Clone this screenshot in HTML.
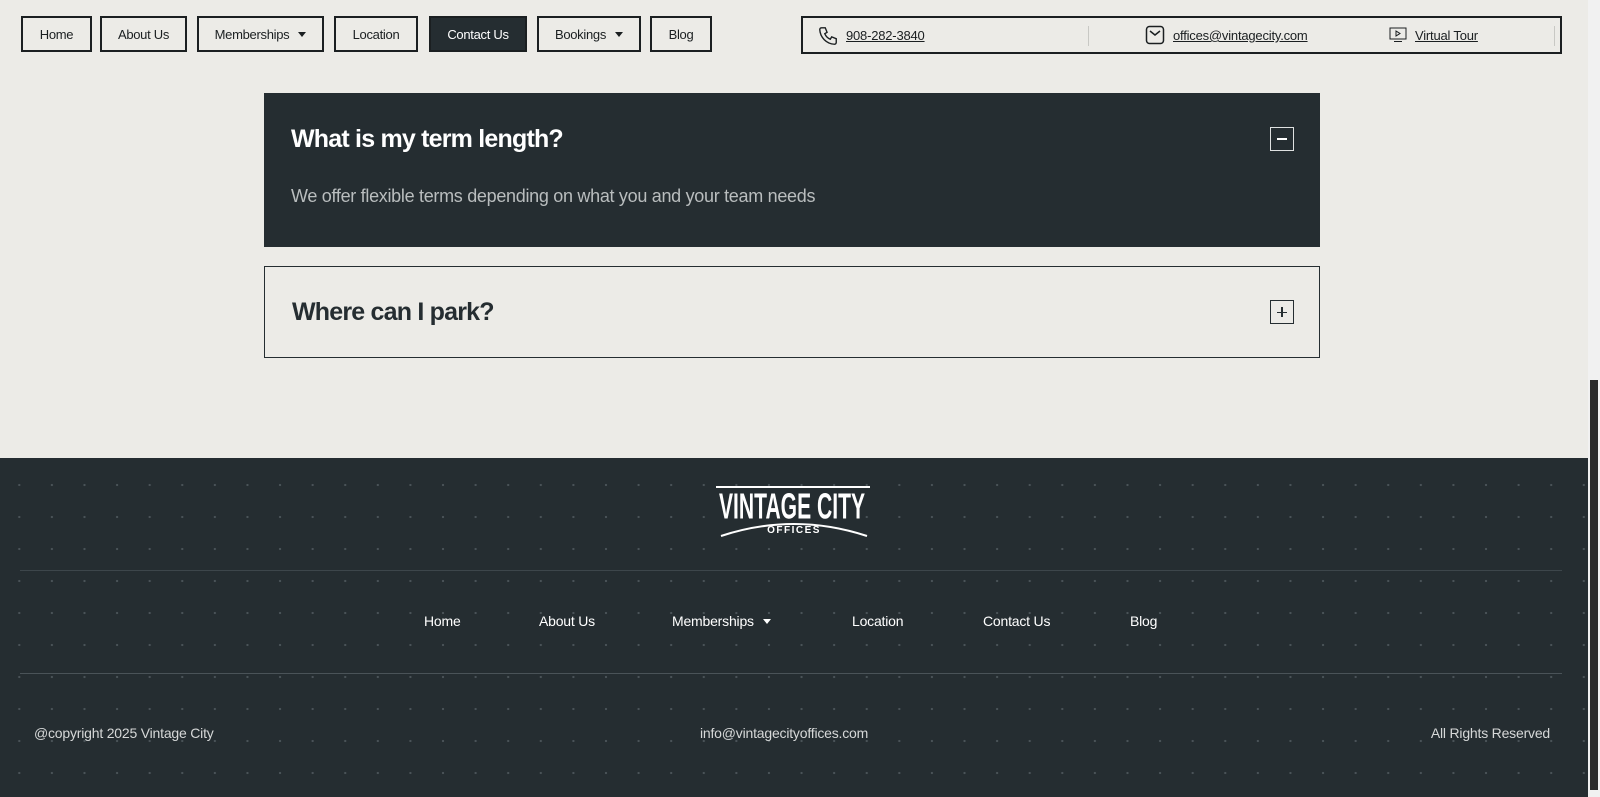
<!DOCTYPE html>
<html><head><meta charset="utf-8"><style>
*{margin:0;padding:0;box-sizing:border-box}
body{width:1600px;height:797px;overflow:hidden;background:#ecebe7;font-family:"Liberation Sans",sans-serif;position:relative;color:#252d31}
.a{position:absolute}
.nb{position:absolute;top:16px;height:36px;border:2px solid #1b1f21;display:flex;align-items:center;justify-content:center;font-size:13px;color:#1b1f21;letter-spacing:-.3px}
.nb.d{background:#252d31;color:#fff}
.car{display:inline-block;border-left:4px solid transparent;border-right:4px solid transparent;border-top:5px solid currentColor;margin-left:9px}
.cb{position:absolute;left:801px;top:16px;width:761px;height:38px;border:2px solid #1b1f21}
.cb a{color:#1b1f21;font-size:13px;text-decoration:underline;position:absolute;top:10px;letter-spacing:-.2px}
.footer{position:absolute;left:0;top:458px;width:1588px;height:339px;background:#252d31;background-image:radial-gradient(circle,#4a5358 1px,transparent 1.3px);background-size:32.6px 32px;background-position:3px 11px}
.fn{position:absolute;top:155px;color:#fff;font-size:14px;letter-spacing:-.2px}
.ft{position:absolute;top:267px;color:#d6d8d8;font-size:14px;letter-spacing:-.2px}
</style></head><body>
<div class="nb" style="left:21px;width:71px">Home</div>
<div class="nb" style="left:100px;width:87px">About Us</div>
<div class="nb" style="left:197px;width:127px">Memberships<span class="car"></span></div>
<div class="nb" style="left:334px;width:84px">Location</div>
<div class="nb d" style="left:429px;width:98px">Contact Us</div>
<div class="nb" style="left:537px;width:104px">Bookings<span class="car"></span></div>
<div class="nb" style="left:650px;width:62px">Blog</div>
<div class="cb">
<svg class="a" style="left:14px;top:7px" width="22" height="22" viewBox="0 0 24 24" fill="none" stroke="#1b1f21" stroke-width="1.5"><path d="M5 3h4l2 5-2.5 1.5a11 11 0 0 0 6 6L16 13l5 2v4a2 2 0 0 1-2 2A17 17 0 0 1 3 5a2 2 0 0 1 2-2"/></svg>
<a style="left:43px">908-282-3840</a>
<div class="a" style="left:285px;top:8px;width:1px;height:20px;background:#c8c8c4"></div>
<svg class="a" style="left:342px;top:7px" width="20" height="20" viewBox="0 0 20 20" fill="none" stroke="#1b1f21" stroke-width="1.5"><rect x="1.5" y="1.5" width="17" height="17" rx="3"/><path d="M5 6l5 4 5-4"/></svg>
<a style="left:370px">offices@vintagecity.com</a>
<svg class="a" style="left:586px;top:9px" width="18" height="16" viewBox="0 0 18 16" fill="none" stroke="#1b1f21" stroke-width="1"><rect x="1" y="1" width="16" height="11"/><path d="M7 4v5l4-2.5z"/><path d="M5 14.5h8"/></svg>
<a style="left:612px">Virtual Tour</a>
<div class="a" style="left:751px;top:8px;width:1px;height:20px;background:#c8c8c4"></div>
</div>

<div class="a" style="left:264px;top:93px;width:1056px;height:154px;background:#252d31">
<div class="a" style="left:27px;top:32px;font-size:25px;font-weight:bold;color:#fff;letter-spacing:-.8px">What is my term length?</div>
<div class="a" style="left:27px;top:93px;font-size:18px;color:#b9bdbe;letter-spacing:-.3px">We offer flexible terms depending on what you and your team needs</div>
<div class="a" style="left:1006px;top:34px;width:24px;height:24px;border:1px solid #dfe1e1"><div class="a" style="left:6px;top:10px;width:10px;height:1.5px;background:#fff"></div></div>
</div>
<div class="a" style="left:264px;top:266px;width:1056px;height:92px;border:1px solid #252d31">
<div class="a" style="left:27px;top:31px;font-size:25px;font-weight:bold;color:#252d31;letter-spacing:-.8px">Where can I park?</div>
<div class="a" style="left:1005px;top:33px;width:24px;height:24px;border:1px solid #252d31"><div class="a" style="left:6px;top:10.5px;width:10px;height:1.5px;background:#252d31"></div><div class="a" style="left:10.3px;top:6px;width:1.5px;height:10px;background:#252d31"></div></div>
</div>

<div class="footer">
<div class="a" style="left:716px;top:28px;width:154px;height:2px;background:#fff"></div>
<div class="a" style="left:642px;top:30px;width:300px;text-align:center;white-space:nowrap;color:#fff;font-family:'Liberation Sans Narrow','Liberation Sans',sans-serif;font-weight:bold;font-size:34px;line-height:36px;transform:scale(.62,1.05);transform-origin:center top;letter-spacing:0">VINTAGE CITY</div>
<svg class="a" style="left:718px;top:60px" width="152" height="20" viewBox="0 0 152 20"><path d="M3 18Q76 -6 149 18" fill="none" stroke="#fff" stroke-width="2"/></svg>
<div class="a" style="left:716px;top:67px;width:156px;text-align:center;color:#fff;font-weight:bold;font-size:10px;letter-spacing:1.5px;white-space:nowrap">OFFICES</div>
<div class="a" style="left:20px;top:112px;width:1542px;height:1px;background:#3d464b"></div>
<div class="fn" style="left:424px">Home</div>
<div class="fn" style="left:539px">About Us</div>
<div class="fn" style="left:672px">Memberships<span class="car" style="margin-left:9px;vertical-align:2px"></span></div>
<div class="fn" style="left:852px">Location</div>
<div class="fn" style="left:983px">Contact Us</div>
<div class="fn" style="left:1130px">Blog</div>
<div class="a" style="left:20px;top:215px;width:1542px;height:1px;background:#4a5358"></div>
<div class="ft" style="left:34px">@copyright 2025 Vintage City</div>
<div class="ft" style="left:700px">info@vintagecityoffices.com</div>
<div class="ft" style="right:38px">All Rights Reserved</div>
</div>
<div class="a" style="left:1588px;top:0;width:12px;height:797px;background:#f1f1f1"></div>
<div class="a" style="left:1590px;top:380px;width:8px;height:410px;background:#2b2b2b"></div>
</body></html>
